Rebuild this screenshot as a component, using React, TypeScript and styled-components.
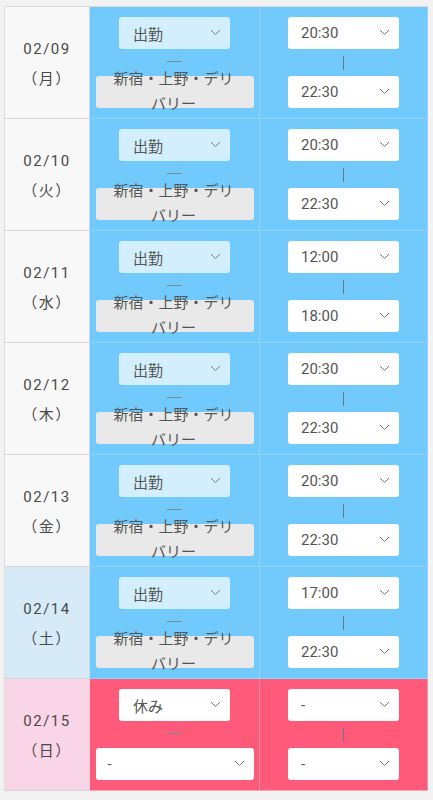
import styled, { createGlobalStyle } from 'styled-components';

const GlobalStyle = createGlobalStyle`
    body {
        margin: 0;
        background: #f2f2f2;
        font-family: Roboto, "Noto Sans CJK JP", sans-serif;
    }
`

const Page = styled.div`
    padding: 6px 5px 0 4px;
`
const Table = styled.div`
    border-top: 1px solid #dcdcdc;
    border-left: 1px solid #dcdcdc;
`
const Row = styled.div`
    display: grid;
    grid-template-columns: 85px 170px 1fr;
    height: 112px;
`
const DateCell = styled.div<{ $kind: string }>`
    display: flex;
    flex-direction: column;
    align-items: center;
    justify-content: center;
    gap: 9px;
    padding-top: 2px;
    border-right: 1px solid #d6d6d6;
    border-bottom: 1px solid #d6d6d6;
    color: #4a4a4a;
    font-size: 15px;
    letter-spacing: 1.5px;
    background: ${p => p.$kind === 'sat' ? '#d7eaf8' : p.$kind === 'sun' ? '#fad4e7' : '#f8f8f8'};
`
const Cell = styled.div<{ $off: boolean }>`
    display: flex;
    flex-direction: column;
    align-items: center;
    padding-top: 10px;
    background: ${p => p.$off ? '#ff5a7a' : '#72c9fb'};
    border-right: 1px solid ${p => p.$off ? '#f58ea2' : '#93d5fa'};
    border-bottom: 1px solid ${p => p.$off ? '#f2a7b6' : '#93d5fa'};
`
const Select = styled.div<{ $w: number; $bg: string; $pad?: number }>`
    position: relative;
    width: ${p => p.$w}px;
    height: 32px;
    box-sizing: border-box;
    border-radius: 3px;
    background: ${p => p.$bg};
    color: #555;
    font-size: 15px;
    display: flex;
    align-items: center;
    padding-left: ${p => p.$pad ?? 14}px;
`
const WrapText = styled.div`
    position: absolute;
    left: 0;
    right: 0;
    top: 50%;
    transform: translateY(-50%);
    text-align: center;
    line-height: 25px;
    padding: 0 14px 0 12px;
    color: #555;
`
const Chevron = styled.svg`
    position: absolute;
    right: 9px;
    top: 12px;
`
const Dash = styled.div`
    width: 15px;
    height: 1px;
    background: #7a8a99;
    margin: 12px 0 14px;
`
const Bar = styled.div`
    width: 1px;
    height: 14px;
    background: #6a7a88;
    margin: 7px 0 6px;
`

function Arrow() {
    return (
        <Chevron width="11" height="7" viewBox="0 0 11 7">
            <path d="M1 1 L5.5 5.5 L10 1" fill="none" stroke="#777" strokeWidth="1" />
        </Chevron>
    );
}

const days = [
    { d: '02/09', w: '月', k: '', s: '出勤', f: '20:30', t: '22:30' },
    { d: '02/10', w: '火', k: '', s: '出勤', f: '20:30', t: '22:30' },
    { d: '02/11', w: '水', k: '', s: '出勤', f: '12:00', t: '18:00' },
    { d: '02/12', w: '木', k: '', s: '出勤', f: '20:30', t: '22:30' },
    { d: '02/13', w: '金', k: '', s: '出勤', f: '20:30', t: '22:30' },
    { d: '02/14', w: '土', k: 'sat', s: '出勤', f: '17:00', t: '22:30' },
    { d: '02/15', w: '日', k: 'sun', s: '休み', f: '-', t: '-' },
];

export default function App() {
    return (
        <Page>
            <GlobalStyle />
            <Table>
                {days.map(day => {
                    const off = day.s === '休み';
                    return (
                        <Row key={day.d}>
                            <DateCell $kind={day.k}>
                                <div>{day.d}</div>
                                <div>（{day.w}）</div>
                            </DateCell>
                            <Cell $off={off}>
                                <Select $w={111} $bg={off ? '#fff' : '#d3eefd'}>
                                    {day.s}
                                    <Arrow />
                                </Select>
                                <Dash />
                                {off ? (
                                    <Select $w={158} $bg="#fff" $pad={12}>
                                        -
                                        <Arrow />
                                    </Select>
                                ) : (
                                    <Select $w={158} $bg="#e9e9e9">
                                        <WrapText>新宿・上野・デリバリー</WrapText>
                                    </Select>
                                )}
                            </Cell>
                            <Cell $off={off}>
                                <Select $w={111} $bg="#fff" $pad={13}>
                                    {day.f}
                                    <Arrow />
                                </Select>
                                <Bar />
                                <Select $w={111} $bg="#fff" $pad={13}>
                                    {day.t}
                                    <Arrow />
                                </Select>
                            </Cell>
                        </Row>
                    );
                })}
            </Table>
        </Page>
    );
}
